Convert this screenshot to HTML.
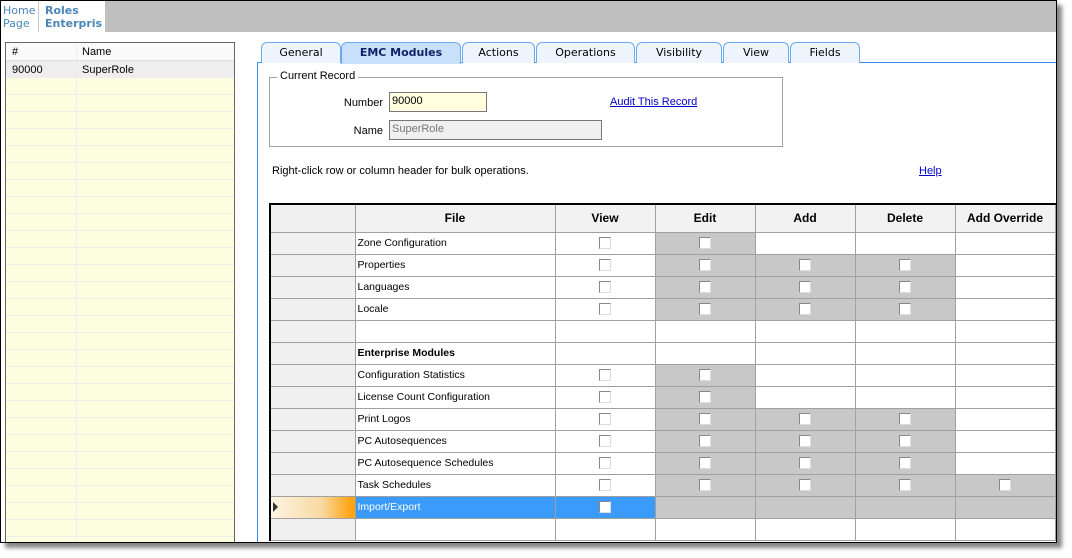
<!DOCTYPE html>
<html><head><style>
*{margin:0;padding:0;box-sizing:border-box}
body{width:1072px;height:558px;background:#fff;position:relative;overflow:hidden;font-family:"Liberation Sans",sans-serif;font-size:11px;color:#000}
.win{position:absolute;left:0;top:0;width:1057px;height:543px;border:1px solid #000;background:#fff;box-shadow:5px 5px 4px #888;overflow:hidden}
.topbar{position:absolute;left:0;top:0;width:1057px;height:31px;background:#c0c0c0}
.t1{position:absolute;left:0;top:0;width:38px;height:31px;background:#fff;border-right:1px solid #ccc;color:#4a86b8;font-family:"DejaVu Sans",sans-serif;font-size:11px;line-height:13px;padding:3px 0 0 2px}
.t2{position:absolute;left:38px;top:0;width:66px;height:31px;background:#fff;color:#4a86b8;font-weight:bold;font-family:"DejaVu Sans",sans-serif;font-size:11px;line-height:13px;padding:3px 0 0 6px}
.list{position:absolute;left:4px;top:41px;width:230px;height:510px;border:1px solid #666;background:#fdfde0}
.list .h{height:18px;background:#fafafa;border-bottom:1px solid #ddd;position:relative}
.list .r{height:17px;border-bottom:1px solid #eee;position:relative}
.list .c2{position:absolute;left:70px;top:0;bottom:0;border-left:1px solid #eee}
.list span{position:absolute;top:3px}
.panel{position:absolute;left:256px;top:61px;width:805px;height:500px;border-left:1px solid #3c8cf0;border-top:1px solid #3c8cf0}
.tab{position:absolute;top:41px;height:21px;border:1px solid #6aaaf0;border-bottom:none;border-radius:6px 6px 0 0;background:#eef5fd;font-family:"DejaVu Sans",sans-serif;font-size:11px;text-align:center;line-height:20px}
.tab.sel{background:#c8e0fa;font-weight:bold;color:#112266;height:22px}
.fs{position:absolute;left:268px;top:76px;width:514px;height:70px;border:1px solid #a0a0a0}
.leg{position:absolute;left:276px;top:69px;background:#fff;padding:0 3px}
.lbl{position:absolute;text-align:right}
.inp{position:absolute;height:20px;border:1px solid #777;padding:2px 2px;font-size:11px}
.a{color:#00c;text-decoration:underline;position:absolute}
table{position:absolute;left:268px;top:202px;border-collapse:collapse;table-layout:fixed;border-left:2px solid #000;border-top:2px solid #000;font-size:10.5px}
td{border:1px solid #a0a0a0;height:22px;padding:0 0 0 2px;white-space:nowrap;overflow:hidden}
th{border:1px solid #a0a0a0;height:28px;background:#f2f2f2;font-weight:bold;font-size:12px;text-align:center}
td.rh{background:#f0f0f0}
td.g{background:#c8c8c8}
td.c{text-align:center;padding:0}
.cb{display:inline-block;width:12px;height:12px;border:1px solid;border-color:#888 #ddd #ddd #888;background:#fff;vertical-align:middle}
tr.sel td{background:#3a9bfb;color:#fff}
tr.sel td.g{background:#c8c8c8}
tr.sel td.rh{background:linear-gradient(90deg,#fdf4e3 0%,#f8d9a2 60%,#ffa412 95%)}
</style></head><body>
<div class="win">
<div class="topbar"></div>
<div class="t1">Home<br>Page</div>
<div class="t2">Roles<br>Enterpris</div>
<div class="list">
<div class="h"><span style="left:6px">#</span><div class="c2"></div><span style="left:76px">Name</span></div>
<div class="r" style="background:#eee"><span style="left:6px">90000</span><div class="c2"></div><span style="left:76px">SuperRole</span></div>
<div class="r"><div class="c2"></div></div><div class="r"><div class="c2"></div></div><div class="r"><div class="c2"></div></div><div class="r"><div class="c2"></div></div><div class="r"><div class="c2"></div></div><div class="r"><div class="c2"></div></div><div class="r"><div class="c2"></div></div><div class="r"><div class="c2"></div></div><div class="r"><div class="c2"></div></div><div class="r"><div class="c2"></div></div><div class="r"><div class="c2"></div></div><div class="r"><div class="c2"></div></div><div class="r"><div class="c2"></div></div><div class="r"><div class="c2"></div></div><div class="r"><div class="c2"></div></div><div class="r"><div class="c2"></div></div><div class="r"><div class="c2"></div></div><div class="r"><div class="c2"></div></div><div class="r"><div class="c2"></div></div><div class="r"><div class="c2"></div></div><div class="r"><div class="c2"></div></div><div class="r"><div class="c2"></div></div><div class="r"><div class="c2"></div></div><div class="r"><div class="c2"></div></div><div class="r"><div class="c2"></div></div><div class="r"><div class="c2"></div></div><div class="r"><div class="c2"></div></div><div class="r"><div class="c2"></div></div>
</div>
<div class="panel"></div>
<div class="tab" style="left:260px;width:80px">General</div>
<div class="tab sel" style="left:340px;width:120px">EMC Modules</div>
<div class="tab" style="left:461px;width:73px">Actions</div>
<div class="tab" style="left:535px;width:99px">Operations</div>
<div class="tab" style="left:635px;width:86px">Visibility</div>
<div class="tab" style="left:722px;width:66px">View</div>
<div class="tab" style="left:789px;width:70px">Fields</div>
<div class="fs"></div>
<div class="leg">Current Record</div>
<div class="lbl" style="left:320px;top:96px;width:62px">Number</div>
<div class="inp" style="left:388px;top:91px;width:98px;background:#ffffe0">90000</div>
<div class="lbl" style="left:320px;top:124px;width:62px">Name</div>
<div class="inp" style="left:388px;top:119px;width:213px;background:#f0f0f0;color:#777">SuperRole</div>
<div class="a" style="left:609px;top:95px">Audit This Record</div>
<div style="position:absolute;left:271px;top:164px">Right-click row or column header for bulk operations.</div>
<div class="a" style="left:918px;top:164px">Help</div>
<table>
<colgroup><col style="width:85px"><col style="width:200px"><col style="width:100px"><col style="width:100px"><col style="width:100px"><col style="width:100px"><col style="width:100px"></colgroup>
<tr><th style="background:#f0f0f0"></th><th>File</th><th>View</th><th>Edit</th><th>Add</th><th>Delete</th><th>Add Override</th></tr>
<tr><td class="rh"></td><td>Zone Configuration</td><td class="c"><span class="cb"></span></td><td class="c g"><span class="cb"></span></td><td></td><td></td><td></td></tr>
<tr><td class="rh"></td><td>Properties</td><td class="c"><span class="cb"></span></td><td class="c g"><span class="cb"></span></td><td class="c g"><span class="cb"></span></td><td class="c g"><span class="cb"></span></td><td></td></tr>
<tr><td class="rh"></td><td>Languages</td><td class="c"><span class="cb"></span></td><td class="c g"><span class="cb"></span></td><td class="c g"><span class="cb"></span></td><td class="c g"><span class="cb"></span></td><td></td></tr>
<tr><td class="rh"></td><td>Locale</td><td class="c"><span class="cb"></span></td><td class="c g"><span class="cb"></span></td><td class="c g"><span class="cb"></span></td><td class="c g"><span class="cb"></span></td><td></td></tr>
<tr><td class="rh"></td><td></td><td></td><td></td><td></td><td></td><td></td></tr>
<tr><td class="rh"></td><td style="font-weight:bold">Enterprise Modules</td><td></td><td></td><td></td><td></td><td></td></tr>
<tr><td class="rh"></td><td>Configuration Statistics</td><td class="c"><span class="cb"></span></td><td class="c g"><span class="cb"></span></td><td></td><td></td><td></td></tr>
<tr><td class="rh"></td><td>License Count Configuration</td><td class="c"><span class="cb"></span></td><td class="c g"><span class="cb"></span></td><td></td><td></td><td></td></tr>
<tr><td class="rh"></td><td>Print Logos</td><td class="c"><span class="cb"></span></td><td class="c g"><span class="cb"></span></td><td class="c g"><span class="cb"></span></td><td class="c g"><span class="cb"></span></td><td></td></tr>
<tr><td class="rh"></td><td>PC Autosequences</td><td class="c"><span class="cb"></span></td><td class="c g"><span class="cb"></span></td><td class="c g"><span class="cb"></span></td><td class="c g"><span class="cb"></span></td><td></td></tr>
<tr><td class="rh"></td><td>PC Autosequence Schedules</td><td class="c"><span class="cb"></span></td><td class="c g"><span class="cb"></span></td><td class="c g"><span class="cb"></span></td><td class="c g"><span class="cb"></span></td><td></td></tr>
<tr><td class="rh"></td><td>Task Schedules</td><td class="c"><span class="cb"></span></td><td class="c g"><span class="cb"></span></td><td class="c g"><span class="cb"></span></td><td class="c g"><span class="cb"></span></td><td class="c g"><span class="cb"></span></td></tr>
<tr class="sel"><td class="rh"><span style="display:inline-block;width:0;height:0;border-left:5px solid #333;border-top:5px solid transparent;border-bottom:5px solid transparent;vertical-align:middle"></span></td><td>Import/Export</td><td class="c"><span class="cb"></span></td><td class="g"></td><td class="g"></td><td class="g"></td><td class="g"></td></tr>
<tr><td class="rh"></td><td></td><td></td><td></td><td></td><td></td><td></td></tr>
</table>
</div>
</body></html>
